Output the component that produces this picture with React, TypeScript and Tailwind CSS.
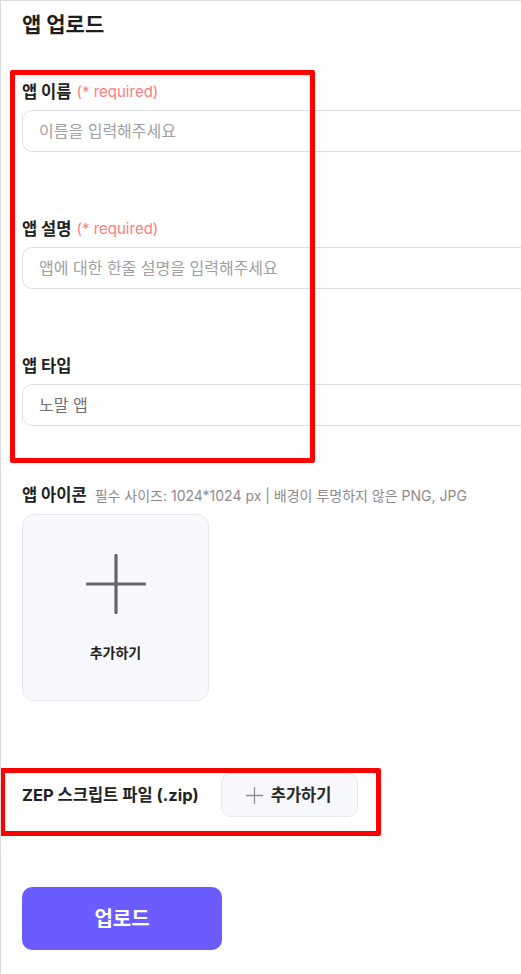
import React from 'react';

const font = { fontFamily: "Inter, 'Noto Sans CJK KR', sans-serif" };

const PlusIcon: React.FC<{ size: number; stroke: number; className?: string }> = ({ size, stroke, className }) => (
  <svg width={size} height={size} viewBox="0 0 60 60" className={className} fill="none">
    <path d="M30 1.5V58.5M1.5 30H58.5" stroke="currentColor" strokeWidth={stroke} strokeLinecap="round" />
  </svg>
);

const Field: React.FC<{ label: string; required?: boolean; children: React.ReactNode; className?: string }> = ({
  label,
  required,
  children,
  className,
}) => (
  <div className={className}>
    <div className="flex items-center h-5 gap-[5px]">
      <span className="text-[16.5px] font-bold text-[#222]">{label}</span>
      {required && <span className="text-[15px] text-[#ff7b7b]">(* required)</span>}
    </div>
    <div className="mt-2 h-[42px] w-[560px] rounded-[10px] border border-[#dcdee6] bg-white flex items-center pl-4">
      {children}
    </div>
  </div>
);

export default function App() {
  return (
    <div
      className="relative w-[521px] h-[974px] overflow-hidden bg-white border-l border-t border-[#dadada]"
      style={font}
    >
      <div className="pl-[21px] pt-[10px]">
        <h1 className="text-[21px] leading-7 font-bold text-[#1e1e1e]">앱 업로드</h1>

        {/* text fields */}
        <Field label="앱 이름" required className="mt-[43px]">
          <span className="text-[16px] text-[#a0a0a0]">이름을 입력해주세요</span>
        </Field>
        <Field label="앱 설명" required className="mt-[67px]">
          <span className="text-[16px] text-[#a0a0a0]">앱에 대한 한줄 설명을 입력해주세요</span>
        </Field>
        <Field label="앱 타입" className="mt-[67px]">
          <span className="text-[16px] text-[#6e6e6e]">노말 앱</span>
        </Field>

        {/* icon */}
        <div className="mt-[59px] flex items-center h-5 gap-[8px]">
          <span className="text-[16.5px] font-bold text-[#222]">앱 아이콘</span>
          <span className="text-[14px] text-[#8b8b8b]">필수 사이즈: 1024*1024 px | 배경이 투명하지 않은 PNG, JPG</span>
        </div>
        <div className="mt-[9px] w-[187px] h-[187px] rounded-[12px] border border-[#e6e7ec] bg-[#f7f8fb] flex flex-col items-center pt-[39px]">
          <PlusIcon size={60} stroke={3.2} className="text-[#64666d]" />
          <span className="mt-[28px] text-[14px] font-bold text-[#222]">추가하기</span>
        </div>

        {/* script file */}
        <div className="mt-[72px] flex items-center gap-[22px]">
          <span className="text-[16.5px] font-bold text-[#222]">ZEP 스크립트 파일 (.zip)</span>
          <button className="h-[44px] w-[137px] rounded-[10px] border border-[#e6e7ec] bg-[#f7f8fb] flex items-center pl-[24px] gap-[8px]">
            <PlusIcon size={17} stroke={4.5} className="text-[#8d8f96]" />
            <span className="text-[16.5px] font-bold text-[#2a2a2a]">추가하기</span>
          </button>
        </div>

        <button className="mt-[70px] w-[200px] h-[63px] rounded-[10px] bg-[#6b5cff] text-white text-[20px] font-bold">
          업로드
        </button>
      </div>

      {/* annotation boxes */}
      <div className="absolute left-[9px] top-[69px] w-[305px] h-[393px] border-[5px] border-[#ff0000] rounded-[2px]" />
      <div className="absolute left-[-1px] top-[767px] w-[381px] h-[68px] border-[5px] border-[#ff0000] rounded-[2px]" />
    </div>
  );
}
